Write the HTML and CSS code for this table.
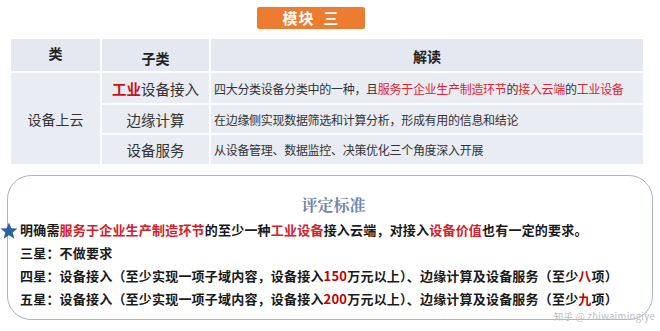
FILE: index.html
```html
<!DOCTYPE html>
<html lang="zh">
<head>
<meta charset="utf-8">
<link rel="stylesheet" href="styles.css">
</head>
<body>
<div class="page">
  <div class="badge-row"><div class="badge">模块&nbsp;&nbsp;三</div></div>
  <div class="table">
    <div class="cell head">类</div>
    <div class="cell head sub-head">子类</div>
    <div class="cell head desc-head">解读</div>
    <div class="cell cat">设备上云</div>
    <div class="cell sub"><span class="red-strong">工业</span>设备接入</div>
    <div class="cell desc">四大分类设备分类中的一种，且<span class="red">服务于企业生产制造环节</span>的<span class="red">接入云端</span>的<span class="red">工业设备</span></div>
    <div class="cell sub">边缘计算</div>
    <div class="cell desc">在边缘侧实现数据筛选和计算分析，形成有用的信息和结论</div>
    <div class="cell sub">设备服务</div>
    <div class="cell desc">从设备管理、数据监控、决策优化三个角度深入开展</div>
  </div>
  <div class="box">
    <svg class="star" viewBox="0 0 20 20" width="18" height="18"><polygon points="10,0.5 12.6,7 19.5,7.3 14.1,11.6 16,18.5 10,14.6 4,18.5 5.9,11.6 0.5,7.3 7.4,7" fill="#2f5fa6"/></svg>
    <div class="title">评定标准</div>
    <div class="line">明确需<span class="red">服务于企业生产制造环节</span>的至少一种<span class="red">工业设备</span>接入云端，对接入<span class="red">设备价值</span>也有一定的要求。</div>
    <div class="line">三星：不做要求</div>
    <div class="line">四星：设备接入（至少实现一项子域内容，设备接入<span class="dark">150</span>万元以上）、边缘计算及设备服务（至少<span class="dark">八</span>项）</div>
    <div class="line">五星：设备接入（至少实现一项子域内容，设备接入<span class="dark">200</span>万元以上）、边缘计算及设备服务（至少<span class="dark">九</span>项）</div>
    <div class="watermark">知乎 @ zhiwaimingiye</div>
  </div>
</div>
</body>
</html>
```

FILE: styles.css
```css
* { box-sizing: border-box; }
html, body { margin: 0; padding: 0; background: #fff; }
body {
  font-family: "Noto Sans CJK SC", "Noto Sans", sans-serif;
  color: #222;
  width: 660px;
  height: 331px;
  overflow: hidden;
}
.page { position: relative; padding-top: 7px; }
.badge-row { padding-left: 257px; }
.badge {
  width: 108px;
  height: 22px;
  background: #ee7c30;
  color: #fff;
  font-weight: 700;
  font-size: 15px;
  line-height: 22px;
  text-align: center;
  border-radius: 2px;
  letter-spacing: 1px;
}
.table {
  margin: 10px 0 0 11px;
  width: 632px;
  display: grid;
  grid-template-columns: 89px 107px 432px;
  grid-template-rows: 32px 30px 28px 29px;
  gap: 2px;
}
.cell {
  background: #e9ecf3;
  display: flex;
  align-items: center;
  justify-content: center;
  font-size: 14px;
  color: #333;
}
.head { background: #e4e8f0; font-weight: 700; color: #222; padding-bottom: 4px; }
.sub-head { padding-bottom: 0; padding-top: 6px; }
.desc-head { padding-bottom: 0; padding-top: 2px; }
.cat { grid-row: 2 / span 3; }
.sub { font-size: 14.5px; }
.desc { justify-content: flex-start; padding-left: 3px; font-size: 12px; color: #333; letter-spacing: -0.3px; }
.red { color: #e0242f; }
.red-strong { color: #cc1016; font-weight: 700; }
.box {
  position: relative;
  margin: 11px 0 0 7px;
  width: 646px;
  height: 145px;
  border: 1.5px solid #a9b5c6;
  border-radius: 24px;
  padding: 19px 0 0 12px;
}
.star { position: absolute; left: -8px; top: 46px; }
.title {
  text-align: center;
  font-family: "Noto Serif CJK SC", "Noto Sans CJK SC", serif;
  font-size: 16px;
  font-weight: 700;
  color: #6d86ac;
  line-height: 20px;
  height: 20px;
  padding-right: 5px;
  margin-bottom: 4px;
}
.line {
  font-size: 13px;
  font-weight: 700;
  color: #1a1a1a;
  line-height: 16px;
  margin-top: 7px;
  white-space: nowrap;
  letter-spacing: 0.2px;
}
.dark { color: #c00000; }
.line .red { color: #d42029; }
.watermark {
  position: absolute;
  right: -3px;
  bottom: -2px;
  font-size: 9.5px;
  line-height: 10px;
  color: #b9bec6;
  letter-spacing: 0.3px;
}
```
